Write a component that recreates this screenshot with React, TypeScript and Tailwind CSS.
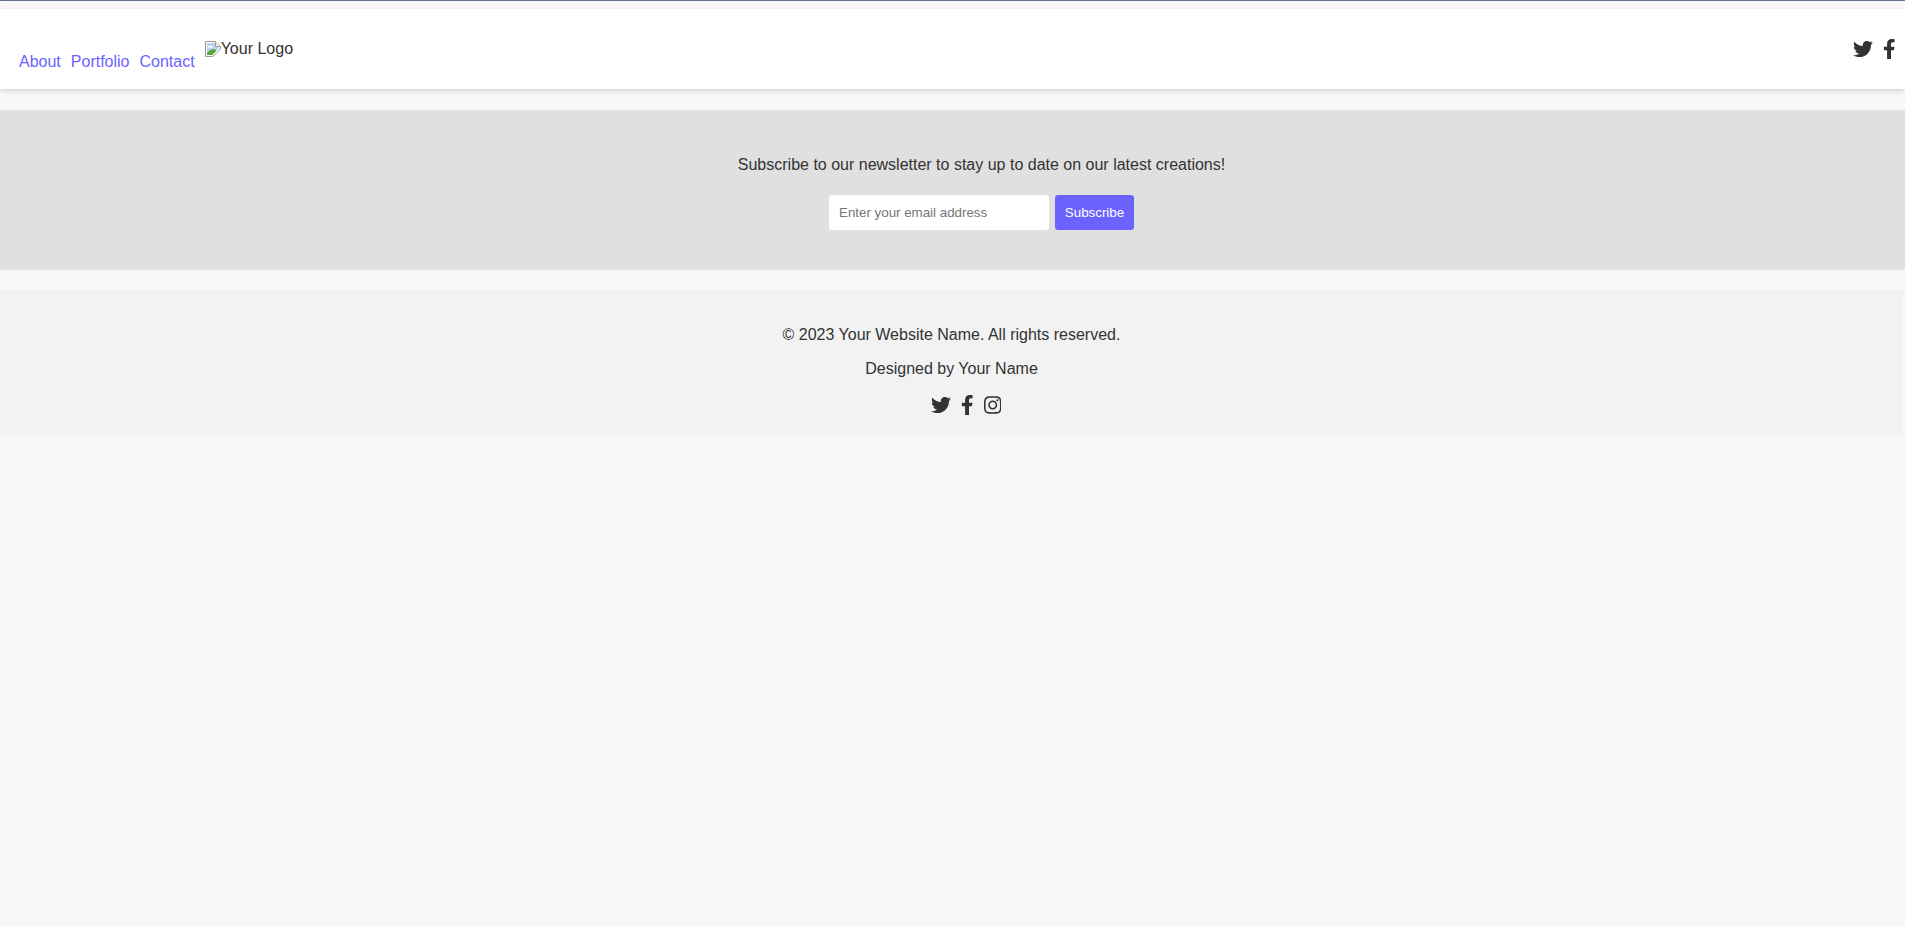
import React from 'react'
import { FaTwitter, FaFacebookF, FaInstagram } from 'react-icons/fa'

const BrokenImage = () => (
    <svg width="16" height="16" viewBox="0 0 16 16" className="mt-1 shrink-0">
        <path d="M0.5 0.5H10.5L15.5 5.5V8L8 15.5H0.5Z" fill="#fff" stroke="#9a9a9a" />
        <path d="M10.5 0.5V5.5H15.5" fill="#eee" stroke="#9a9a9a" />
        <path d="M2 2H10V6H14V8L12 9L7.5 14H2Z" fill="#bcd3f2" />
        <path d="M2.5 6.5C3.5 4 7 4 8.5 6.5Z" fill="#fff" />
        <path d="M2 14V12C4 9.5 7 7.5 10 8.5L11.5 9.5L7.5 14Z" fill="#5aa63a" />
    </svg>
)

const App = () => {
    return (
        <div className="min-h-[927px] bg-[#f8f8f8] font-['Liberation_Sans',Arial,sans-serif] text-base text-[#333]">
            <div className="h-px bg-[#64748b]"></div>

            <header className="mt-2 flex h-20 items-center justify-between bg-white pl-[19px] pr-[10px] shadow-[0_2px_5px_rgba(0,0,0,0.15)]">
                <div className="flex items-start pt-3">
                    <nav className="mt-[13px] flex gap-2.5 text-[#6c63ff]">
                        <a>About</a>
                        <a>Portfolio</a>
                        <a>Contact</a>
                    </nav>
                    <div className="ml-2.5 flex items-start">
                        <BrokenImage />
                        <span>Your Logo</span>
                    </div>
                </div>
                <div className="flex items-center gap-2.5 text-xl">
                    <FaTwitter />
                    <FaFacebookF className="w-[12.5px]" />
                </div>
            </header>

            <section className="mt-[21px] flex h-40 flex-col items-center bg-[#e0e0e0] pl-[58px] pt-[46px]">
                <p className="leading-[18px]">Subscribe to our newsletter to stay up to date on our latest creations!</p>
                <form className="mt-[21px] flex gap-[6px]">
                    <input
                        placeholder="Enter your email address"
                        className="h-[35px] w-[220px] rounded-[3px] bg-white px-2.5 text-[13.33px] outline-none placeholder:text-[#757575]"
                    />
                    <button type="button" className="h-[35px] w-[79px] rounded-[3px] bg-[#6c63ff] text-[13.33px] text-white">
                        Subscribe
                    </button>
                </form>
            </section>

            <footer className="mt-5 mr-[2px] flex h-[147px] flex-col items-center bg-[#f2f2f2] pt-9">
                <p className="leading-[18px]">© 2023 Your Website Name. All rights reserved.</p>
                <p className="mt-4 leading-[18px]">Designed by Your Name</p>
                <div className="mt-[17px] ml-[29px] flex items-center gap-2.5 text-xl">
                    <FaTwitter />
                    <FaFacebookF className="w-[12.5px]" />
                    <FaInstagram className="w-[17.5px]" />
                </div>
            </footer>
        </div>
    )
}

export default App
